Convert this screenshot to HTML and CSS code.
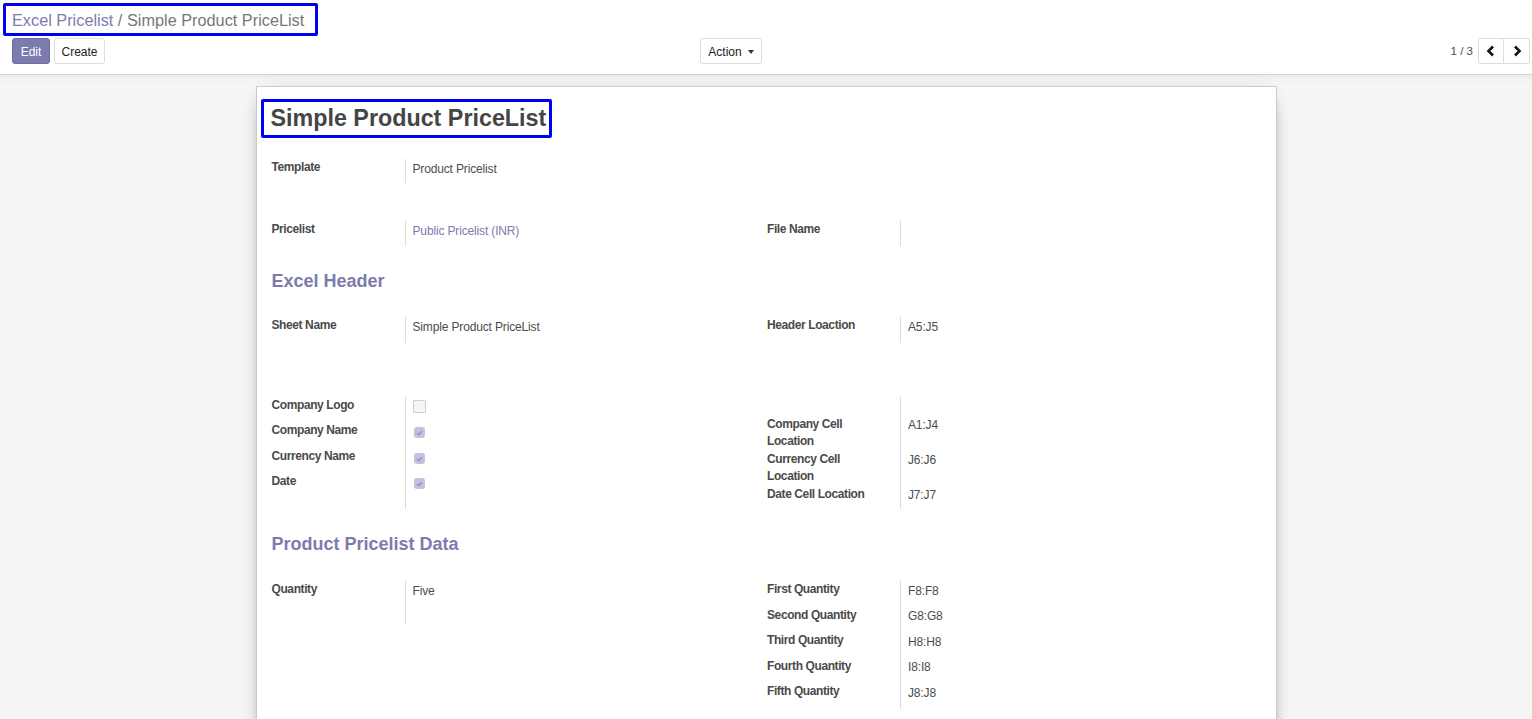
FILE: index.html
```html
<!DOCTYPE html>
<html>
<head>
<meta charset="utf-8">
<link rel="stylesheet" href="styles.css">
</head>
<body>
<div class="control-panel">
  <div class="breadcrumb"><span class="crumb-link">Excel Pricelist</span><span class="crumb-sep"> / </span><span class="crumb-active">Simple Product PriceList</span></div>
  <div class="cp-bottom">
    <div class="cp-buttons">
      <button class="btn btn-primary">Edit</button>
      <button class="btn btn-default btn-create">Create</button>
    </div>
    <div class="cp-sidebar">
      <button class="btn btn-default btn-action">Action<span class="caret"></span></button>
    </div>
    <div class="cp-pager">
      <span class="pager-value">1 / 3</span>
      <div class="pager-buttons">
        <button class="btn btn-default btn-pager"><svg width="10" height="12" viewBox="0 0 10 12"><path d="M7 1.5 L2.5 6 L7 10.5" fill="none" stroke="#111" stroke-width="2.6" stroke-linejoin="miter"/></svg></button>
        <button class="btn btn-default btn-pager"><svg width="10" height="12" viewBox="0 0 10 12"><path d="M3 1.5 L7.5 6 L3 10.5" fill="none" stroke="#111" stroke-width="2.6" stroke-linejoin="miter"/></svg></button>
      </div>
    </div>
  </div>
</div>

<div class="content">
  <div class="sheet">
    <h1 class="title">Simple Product PriceList</h1>

    <div class="group group-single">
      <div class="label">Template</div>
      <div class="value">Product Pricelist</div>
    </div>

    <div class="two-cols row-pricelist">
      <div class="group">
        <div class="label">Pricelist</div>
        <div class="value link">Public Pricelist (INR)</div>
      </div>
      <div class="group">
        <div class="label">File Name</div>
        <div class="value"></div>
      </div>
    </div>

    <h2 class="separator sep-header">Excel Header</h2>

    <div class="two-cols">
      <div class="group rows-26">
        <div class="label">Sheet Name</div>
        <div class="value">Simple Product PriceList</div>
      </div>
      <div class="group rows-26">
        <div class="label">Header Loaction</div>
        <div class="value">A5:J5</div>
      </div>
    </div>

    <div class="two-cols row-checks">
      <div class="group group-checks">
        <div class="label">Company Logo</div>
        <div class="value"><span class="checkbox"></span></div>
        <div class="label">Company Name</div>
        <div class="value chk"><span class="checkbox checked"><svg width="7" height="6" viewBox="0 0 7 6"><path d="M1 3 L2.8 4.6 L6 1.2" fill="none" stroke="#8f8cbf" stroke-width="1.3"/></svg></span></div>
        <div class="label">Currency Name</div>
        <div class="value chk"><span class="checkbox checked"><svg width="7" height="6" viewBox="0 0 7 6"><path d="M1 3 L2.8 4.6 L6 1.2" fill="none" stroke="#8f8cbf" stroke-width="1.3"/></svg></span></div>
        <div class="label">Date</div>
        <div class="value chk last"><span class="checkbox checked"><svg width="7" height="6" viewBox="0 0 7 6"><path d="M1 3 L2.8 4.6 L6 1.2" fill="none" stroke="#8f8cbf" stroke-width="1.3"/></svg></span></div>
      </div>
      <div class="group group-locations">
        <div class="label top-pad">Company Cell Location</div>
        <div class="value top-pad">A1:J4</div>
        <div class="label">Currency Cell Location</div>
        <div class="value">J6:J6</div>
        <div class="label bottom-pad">Date Cell Location</div>
        <div class="value bottom-pad">J7:J7</div>
      </div>
    </div>

    <h2 class="separator sep-data">Product Pricelist Data</h2>

    <div class="two-cols">
      <div class="group group-quantity">
        <div class="label">Quantity</div>
        <div class="value">Five</div>
      </div>
      <div class="group group-qty-cells">
        <div class="label">First Quantity</div>
        <div class="value">F8:F8</div>
        <div class="label">Second Quantity</div>
        <div class="value">G8:G8</div>
        <div class="label">Third Quantity</div>
        <div class="value">H8:H8</div>
        <div class="label">Fourth Quantity</div>
        <div class="value">I8:I8</div>
        <div class="label">Fifth Quantity</div>
        <div class="value">J8:J8</div>
      </div>
    </div>
  </div>
</div>
</body>
</html>
```

FILE: styles.css
```css
* { box-sizing: border-box; }

html, body {
  margin: 0;
  padding: 0;
  height: 100%;
}

body {
  font-family: "Liberation Sans", Arial, sans-serif;
  font-size: 12px;
  color: #4c4c4c;
  background: #fff;
  overflow: hidden;
}

/* ---------- control panel ---------- */
.control-panel {
  height: 75px;
  padding: 0 2px 0 12px;
  border-bottom: 1px solid #d4d4d4;
  background: #fff;
}

.breadcrumb {
  display: inline-block;
  margin: 3px 0 0 -9px;
  padding: 2px 11px 0 6px;
  height: 33px;
  border: 3px solid #0000f2;
  border-radius: 2px;
  font-size: 16.3px;
  line-height: 25px;
  white-space: nowrap;
  vertical-align: top;
}

.crumb-link { color: #7c7bad; }
.crumb-sep, .crumb-active { color: #777; }

.cp-bottom {
  display: flex;
  align-items: center;
  margin-top: 2px;
  height: 26px;
}

.cp-buttons, .cp-pager, .pager-buttons {
  display: flex;
  align-items: center;
}

.cp-buttons { gap: 4px; flex: 0 0 688px; }
.cp-sidebar { flex: 0 0 auto; }
.cp-pager { flex: 1 1 auto; justify-content: flex-end; }

.btn {
  font-family: "Liberation Sans", Arial, sans-serif;
  font-size: 12px;
  height: 26px;
  padding: 0 8px;
  border-radius: 3px;
  border: 1px solid #ddd;
  background: #fff;
  color: #222;
  line-height: 26px;
  white-space: nowrap;
  cursor: pointer;
}

.btn-primary {
  background: #7c7bad;
  border-color: #6f6ea2;
  color: #fff;
  width: 38px;
  padding: 0;
}

.btn-create { width: 51px; padding: 0; }
.btn-action { width: 62px; padding: 0; }

.caret {
  display: inline-block;
  width: 0;
  height: 0;
  margin-left: 6px;
  vertical-align: 2px;
  border-top: 4px solid #333;
  border-left: 3.5px solid transparent;
  border-right: 3.5px solid transparent;
}

.pager-value {
  margin-right: 5px;
  color: #4c4c4c;
  font-size: 11.5px;
}

.btn-pager {
  width: 26px;
  padding: 0;
  display: flex;
  align-items: center;
  justify-content: center;
}
.pager-buttons .btn-pager:first-child {
  border-top-right-radius: 0;
  border-bottom-right-radius: 0;
}
.pager-buttons .btn-pager:last-child {
  border-left: none;
  border-top-left-radius: 0;
  border-bottom-left-radius: 0;
}

/* ---------- content ---------- */
.content {
  height: calc(100% - 75px);
  padding-top: 11px;
  background-color: #f6f6f6;
  background-image: repeating-conic-gradient(#f2f2f2 0 25%, #f9f9f9 0 50%);
  background-size: 4px 4px;
  box-shadow: inset 0 10px 10px -8px rgba(0, 0, 0, 0.06);
}

.sheet {
  width: 1021px;
  margin: 0 auto;
  min-height: 700px;
  padding: 12px 14px 0 14px;
  background: #fff;
  border: 1px solid #c9c9d6;
  box-shadow: 0 5px 20px -12px #000;
}

.title {
  display: inline-block;
  margin: 0 0 0 -10px;
  padding: 0 3px 0 7px;
  height: 39px;
  border: 3px solid #0000f2;
  border-radius: 2px;
  font-size: 23.3px;
  line-height: 33px;
  font-weight: bold;
  color: #454545;
  white-space: nowrap;
  vertical-align: top;
}

/* ---------- groups ---------- */
.two-cols {
  display: grid;
  grid-template-columns: 1fr 1fr;
}

.group {
  display: grid;
  grid-template-columns: 134px 1fr;
  grid-auto-rows: 25px;
  align-content: start;
}

.group-single { margin-top: 21px; grid-auto-rows: 24px; width: 50%; }

.row-pricelist { margin-top: 38px; }

.label {
  font-weight: bold;
  line-height: 17px;
  padding-left: 1px;
  padding-right: 16px;
  letter-spacing: -0.4px;
  color: #4a4a4a;
}

.value {
  border-left: 1px solid #dcdcdc;
  padding-left: 7px;
  padding-top: 2px;
  line-height: 17px;
  letter-spacing: -0.15px;
  color: #4c4c4c;
}

.value.link { color: #7c7bad; }

.rows-26 { grid-auto-rows: 26px; }

.separator {
  margin: 23px 0 24px 0;
  padding-left: 1px;
  font-size: 18px;
  line-height: 24px;
  font-weight: bold;
  color: #7c7bad;
}
.sep-data { margin: 23px 0 25px 0; }

.row-checks { margin-top: 54px; }

.group-checks {
  grid-template-rows: 25px 26px 25px 36px;
}
.group-checks .value { padding-top: 3px; }
.group-checks .value.chk { padding-top: 5px; padding-left: 8px; }

.checkbox {
  display: inline-block;
  width: 13px;
  height: 13px;
  border: 1px solid #cfcfcf;
  background: #f5f5f5;
  border-radius: 1px;
  vertical-align: top;
}

.checkbox.checked {
  width: 11px;
  height: 11px;
  border: none;
  border-radius: 3px;
  background: #c3c1de;
  display: inline-flex;
  align-items: center;
  justify-content: center;
}

.group-locations {
  grid-auto-rows: auto;
  grid-template-rows: 53.5px 35px 23.5px;
}
.group-locations .value { padding-top: 1px; }
.group-locations .label.top-pad { padding-top: 18.5px; }
.group-locations .value.top-pad { padding-top: 19.5px; }

.group-quantity { grid-auto-rows: 43px; }

.group-qty-cells {
  grid-auto-rows: 25.5px;
}
.group-qty-cells .value { padding-top: 1.5px; }
```
